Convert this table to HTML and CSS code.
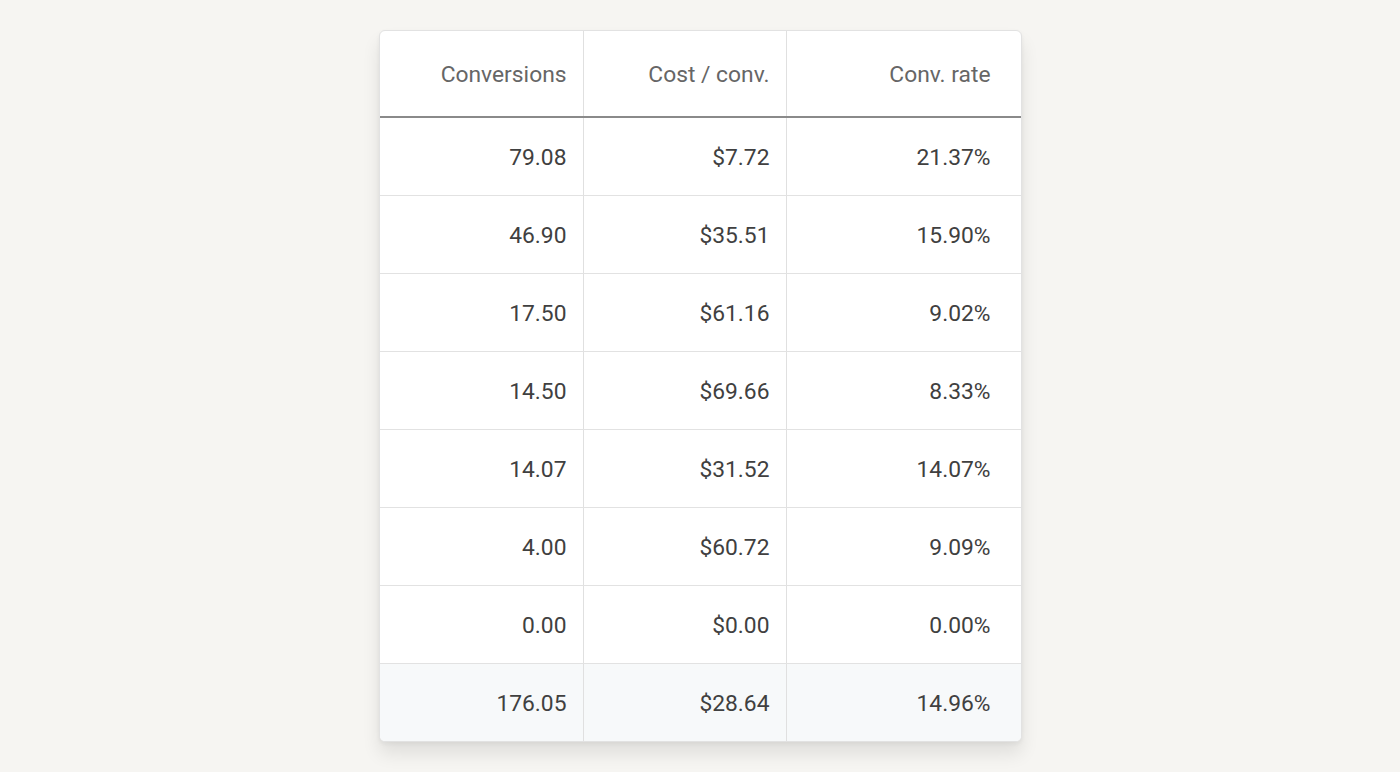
FILE: index.html
```html
<!DOCTYPE html>
<html>
<head>
<meta charset="utf-8">
<link rel="stylesheet" href="styles.css">
</head>
<body>
<div class="page">
  <div class="card">
    <table class="tbl">
      <thead>
        <tr><th>Conversions</th><th>Cost / conv.</th><th class="last">Conv. rate</th></tr>
      </thead>
      <tbody>
        <tr><td>79.08</td><td>$7.72</td><td class="last">21.37%</td></tr>
        <tr><td>46.90</td><td>$35.51</td><td class="last">15.90%</td></tr>
        <tr><td>17.50</td><td>$61.16</td><td class="last">9.02%</td></tr>
        <tr><td>14.50</td><td>$69.66</td><td class="last">8.33%</td></tr>
        <tr><td>14.07</td><td>$31.52</td><td class="last">14.07%</td></tr>
        <tr><td>4.00</td><td>$60.72</td><td class="last">9.09%</td></tr>
        <tr><td>0.00</td><td>$0.00</td><td class="last">0.00%</td></tr>
        <tr class="total"><td>176.05</td><td>$28.64</td><td class="last">14.96%</td></tr>
      </tbody>
    </table>
  </div>
</div>
</body>
</html>
```

FILE: styles.css
```css
html, body {
  margin: 0;
  padding: 0;
  background: #f6f5f2;
  font-family: Roboto, "Liberation Sans", sans-serif;
}
.page {
  width: 1400px;
  height: 772px;
  display: flex;
  justify-content: center;
  align-items: flex-start;
  padding-top: 30px;
  box-sizing: border-box;
}
.card {
  margin-left: 0;
  width: 641px;
  background: #fff;
  border: 1px solid #e2e2e2;
  border-radius: 6px;
  overflow: hidden;
  box-shadow: 0 12px 18px rgba(0,0,0,0.09), 0 2px 4px rgba(0,0,0,0.05);
}
.tbl {
  width: 100%;
  border-collapse: collapse;
  table-layout: fixed;
}
.tbl th, .tbl td {
  text-align: right;
  font-size: 22.8px;
  padding: 2px 16px 0 0;
  border-right: 1px solid #e0e0e0;
}
.tbl th:nth-child(1), .tbl td:nth-child(1) { width: 187px; }
.tbl th:nth-child(2), .tbl td:nth-child(2) { width: 186px; }
.tbl .last { border-right: none; padding-right: 30px; }
.tbl th {
  height: 83px;
  font-weight: 400;
  color: #666666;
  border-bottom: 2px solid #8a8a8a;
}
.tbl td {
  height: 75px;
  color: #404040;
  border-bottom: 1px solid #e2e2e2;
}
.tbl tr:last-child td { border-bottom: none; }
.tbl .total td { background: #f7f9fa; }
```
